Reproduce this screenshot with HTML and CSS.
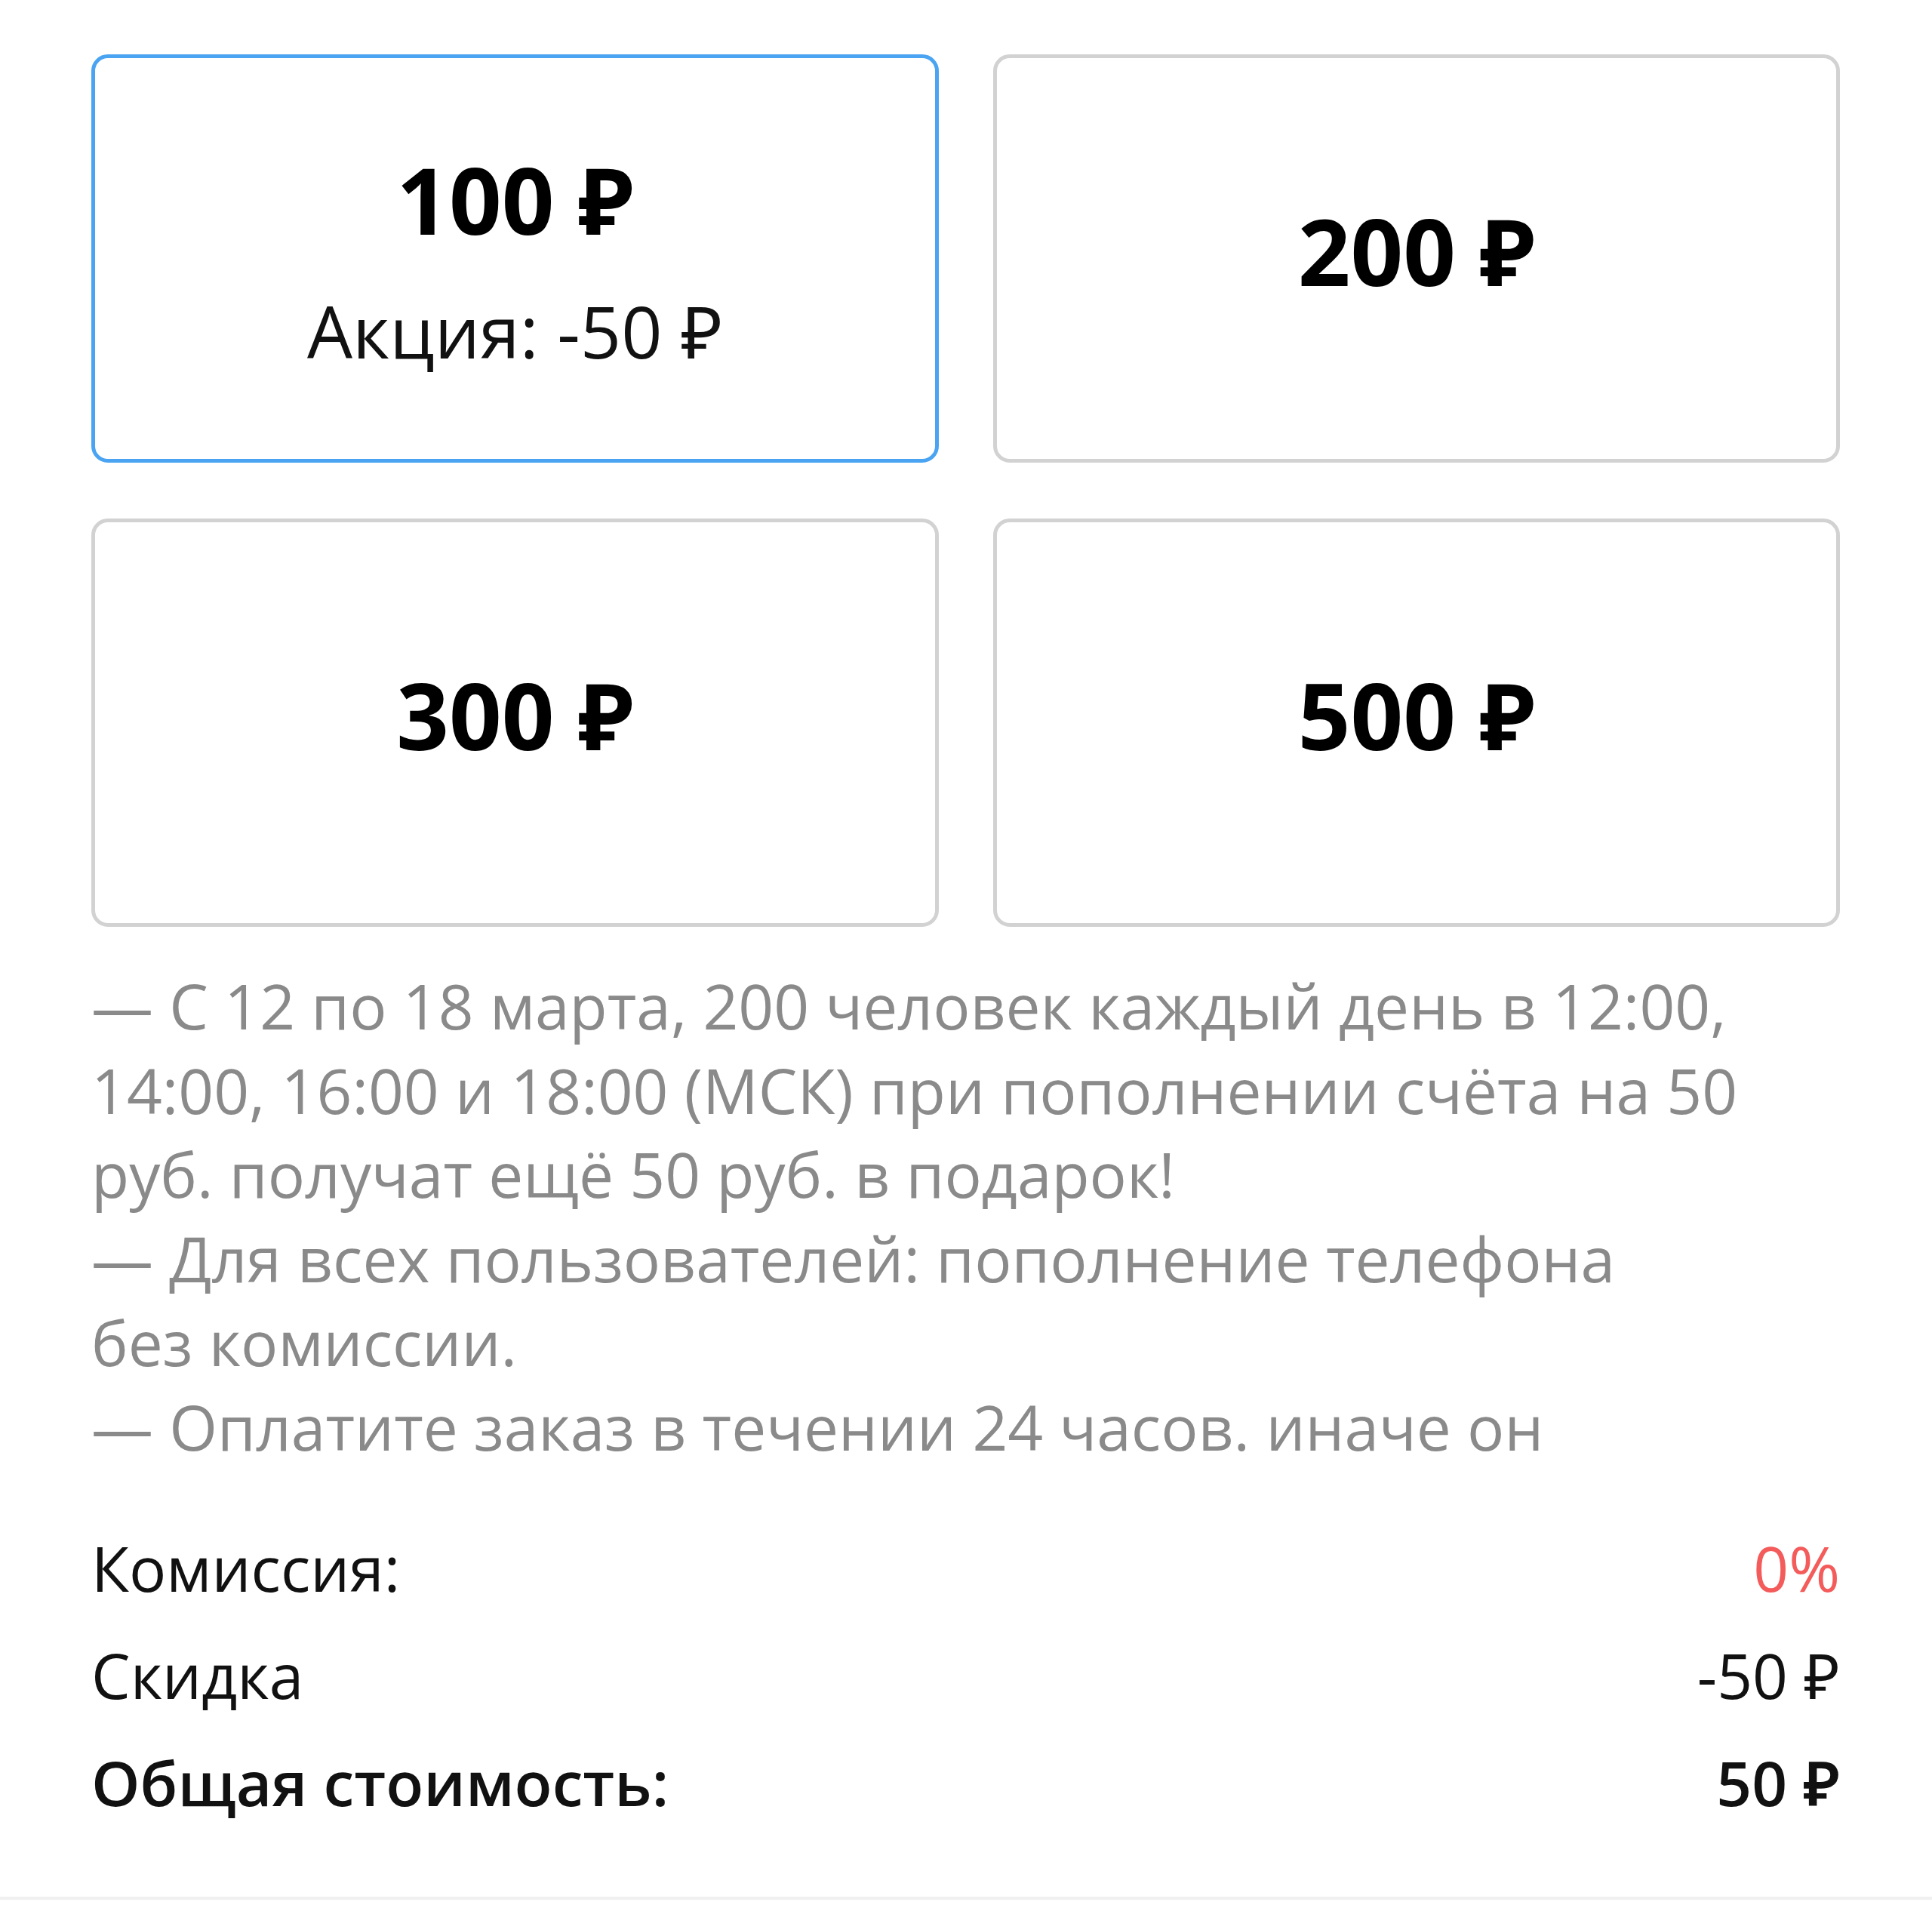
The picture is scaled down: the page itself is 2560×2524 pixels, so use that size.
FILE: index.html
```html
<!DOCTYPE html>
<html lang="ru">
<head>
<meta charset="utf-8">
<title>Пополнение</title>
<link rel="stylesheet" href="styles.css">
</head>
<body>
<div class="page">
  <div class="amounts">
    <div class="card card--active">
      <div class="price">100 ₽</div>
      <div class="promo">Акция: -50 ₽</div>
    </div>
    <div class="card card--single">
      <div class="price">200 ₽</div>
    </div>
    <div class="card card--single">
      <div class="price">300 ₽</div>
    </div>
    <div class="card card--single">
      <div class="price">500 ₽</div>
    </div>
  </div>
  <div class="notes">
    <span class="line">— С 12 по 18 марта, 200 человек каждый день в 12:00,</span>
    <span class="line">14:00, 16:00 и 18:00 (МСК) при пополнении счёта на 50</span>
    <span class="line">руб. получат ещё 50 руб. в подарок!</span>
    <span class="line">— Для всех пользователей: пополнение телефона</span>
    <span class="line">без комиссии.</span>
    <span class="line">— Оплатите заказ в течении 24 часов. иначе он</span>
  </div>
  <div class="summary">
    <div class="row">
      <span class="label">Комиссия:</span>
      <span class="value value--red">0%</span>
    </div>
    <div class="row">
      <span class="label">Скидка</span>
      <span class="value">-50 ₽</span>
    </div>
    <div class="row row--total">
      <span class="label">Общая стоимость:</span>
      <span class="value">50 ₽</span>
    </div>
  </div>
</div>
<div class="bottom-bar"></div>
</body>
</html>
```
FILE: styles.css
```css
html, body {
  margin: 0;
  padding: 0;
  background: #ffffff;
}
body {
  font-family: "Open Sans", "Noto Sans", sans-serif;
  color: #111111;
}
.page {
  padding: 72px 122px 0 121px;
}
.amounts {
  display: grid;
  grid-template-columns: 1fr 1fr;
  column-gap: 72px;
  row-gap: 74px;
}
.card {
  box-sizing: border-box;
  height: 541px;
  border: 5px solid #d2d2d2;
  border-radius: 22px;
  display: flex;
  flex-direction: column;
  align-items: center;
  justify-content: center;
}
.card--active {
  border-color: #4aa4f2;
}
.card--single {
  padding-bottom: 22px;
}
.price {
  font-size: 122px;
  font-weight: 700;
  line-height: 146px;
  color: #000000;
}
.promo {
  margin-top: 44px;
  font-size: 95px;
  line-height: 114px;
  color: #111111;
}
.notes {
  margin-top: 49px;
  font-size: 82px;
  line-height: 111.5px;
  color: #8a8a8a;
  display: flex;
  flex-direction: column;
}
.line {
  white-space: nowrap;
}
.summary {
  margin-top: 60px;
  display: flex;
  flex-direction: column;
}
.row {
  display: flex;
  justify-content: space-between;
  font-size: 82px;
  line-height: 142px;
  color: #111111;
}
.row--total {
  font-weight: 600;
}
.value--red {
  color: #f45b5b;
}
.bottom-bar {
  margin-top: 81px;
  height: 10px;
  border-top: 4px solid #f0f0f0;
}
```
